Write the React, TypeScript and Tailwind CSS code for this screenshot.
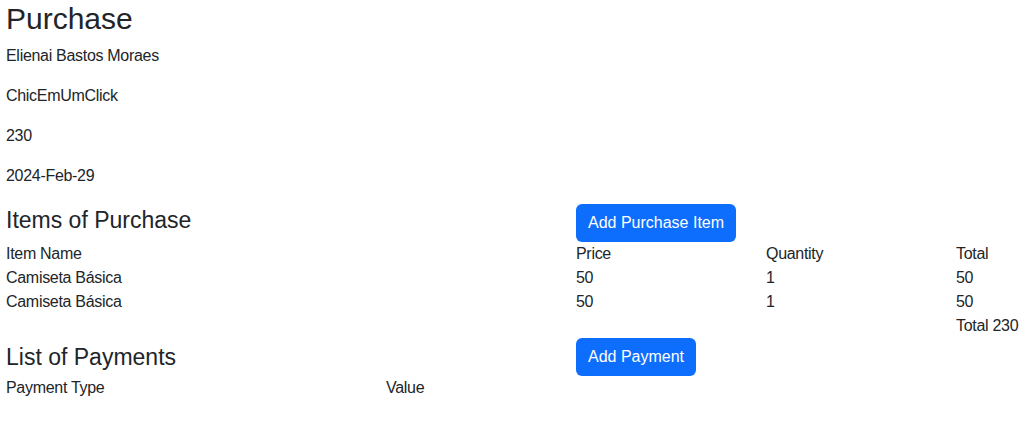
import React from 'react';

const items = [
  { name: 'Camiseta Básica', price: 50, qty: 1, total: 50 },
  { name: 'Camiseta Básica', price: 50, qty: 1, total: 50 },
];

export default function App() {
  return (
    <div className="min-h-screen overflow-hidden bg-white pl-[6px] pt-[1px] text-[#212529] text-[16px] leading-[24px] tracking-[-0.3px] font-['Liberation_Sans',Arial,sans-serif]">
      <h1 className="text-[30px] leading-[35px] mb-[8px] tracking-normal">Purchase</h1>
      <p className="mb-[16px]">Elienai Bastos Moraes</p>
      <p className="mb-[16px]">ChicEmUmClick</p>
      <p className="mb-[16px]">230</p>
      <p className="mb-[16px]">2024-Feb-29</p>

      {/* Items */}
      <div className="grid grid-cols-[570px_570px] w-[1140px]">
        <h3 className="text-[23px] leading-[32px] tracking-normal">Items of Purchase</h3>
        <div>
          <button className="bg-[#0d6efd] text-white rounded-[6px] px-[12px] h-[38px] tracking-normal">
            Add Purchase Item
          </button>
        </div>
      </div>
      <div className="grid grid-cols-[570px_190px_190px_190px] w-[1140px]">
        <div>Item Name</div>
        <div>Price</div>
        <div>Quantity</div>
        <div>Total</div>
        {items.map((it, i) => (
          <React.Fragment key={i}>
            <div>{it.name}</div>
            <div>{it.price}</div>
            <div>{it.qty}</div>
            <div>{it.total}</div>
          </React.Fragment>
        ))}
        <div />
        <div />
        <div />
        <div>Total 230</div>
      </div>

      {/* Payments */}
      <div className="grid grid-cols-[570px_570px] w-[1140px]">
        <h3 className="text-[23px] leading-[32px] tracking-normal self-center">List of Payments</h3>
        <div>
          <button className="bg-[#0d6efd] text-white rounded-[6px] px-[12px] h-[38px] tracking-normal">
            Add Payment
          </button>
        </div>
      </div>
      <div className="grid grid-cols-[380px_380px] w-[760px]">
        <div>Payment Type</div>
        <div>Value</div>
      </div>
    </div>
  );
}
